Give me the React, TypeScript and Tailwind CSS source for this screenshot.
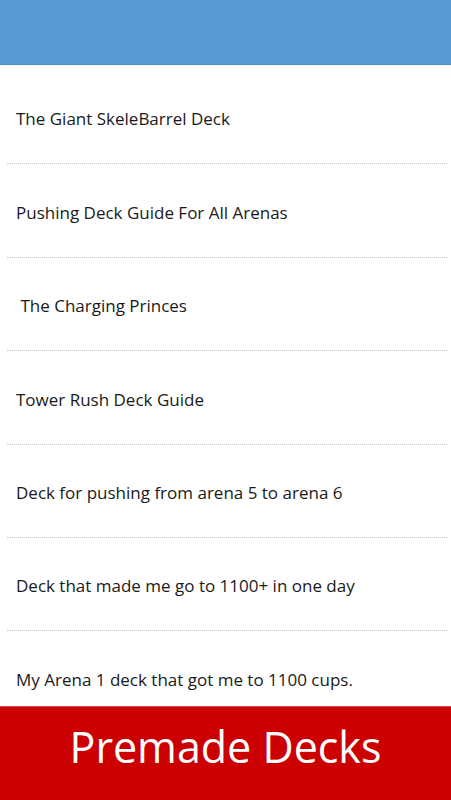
import React from 'react';

const decks: string[] = [
    'The Giant SkeleBarrel Deck',
    'Pushing Deck Guide For All Arenas',
    '\u00a0The Charging Princes',
    'Tower Rush Deck Guide',
    'Deck for pushing from arena 5 to arena 6',
    'Deck that made me go to 1100+ in one day',
    'My Arena 1 deck that got me to 1100 cups.',
];

const App: React.FC = () => {
    return (
        <div className="h-screen flex flex-col bg-white overflow-hidden font-['Open_Sans',sans-serif]">
            {/* Top bar */}
            <div className="h-[65px] shrink-0 bg-[#5b9bd5] border-b border-[#4f8dc8]"></div>

            {/* Deck list */}
            <div className="flex-1 overflow-hidden pt-[6px]">
                {decks.map((title, index) => (
                    <div key={index} className="ml-[7px] mr-[4px] h-[93.4px] flex items-center pl-[9px] pt-[4px] border-b border-dotted border-[#c8c8c8]">
                        <span className="text-[17px] text-[#1a1a1a] whitespace-pre">{title}</span>
                    </div>
                ))}
            </div>

            {/* Bottom banner */}
            <div className="h-[94px] shrink-0 bg-[#cc0000] border-t border-[#d84a4a] flex items-center justify-center pb-[14px]">
                <span className="text-white text-[43px] leading-none">Premade Decks</span>
            </div>
        </div>
    );
};

export default App;
